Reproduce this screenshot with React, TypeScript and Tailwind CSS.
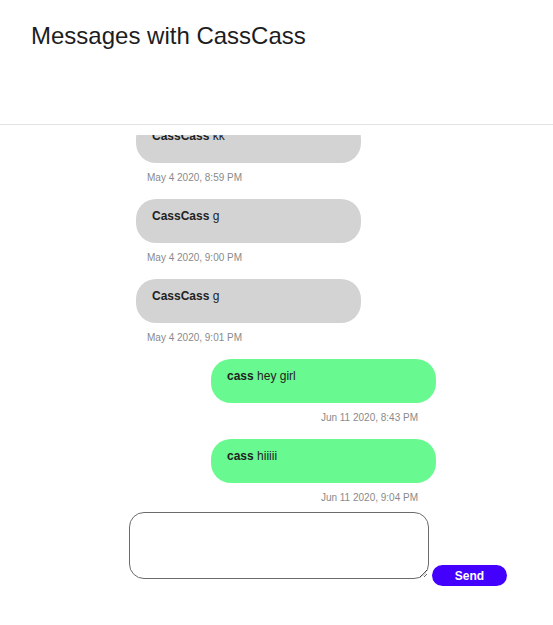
import React from "react";

type Msg = { from: string; text: string; time: string; mine: boolean };

const messages: Msg[] = [
  { from: "CassCass", text: "kk", time: "May 4 2020, 8:59 PM", mine: false },
  { from: "CassCass", text: "g", time: "May 4 2020, 9:00 PM", mine: false },
  { from: "CassCass", text: "g", time: "May 4 2020, 9:01 PM", mine: false },
  { from: "cass", text: "hey girl", time: "Jun 11 2020, 8:43 PM", mine: true },
  { from: "cass", text: "hiiiii", time: "Jun 11 2020, 9:04 PM", mine: true },
];

export default function App() {
  return (
    <div className="h-[625px] w-full bg-white font-['Liberation_Sans',Arial,sans-serif] text-[#222]">
      <header className="h-[125px] border-b border-[#e3e3e3] pl-[31px] pt-[24px]">
        <h1 className="text-[24px] leading-none font-normal text-[#1d1d1f]">Messages with CassCass</h1>
      </header>

      <div className="mt-[10px] flex h-[369px] flex-col justify-end overflow-hidden">
        <div className="ml-[136px] w-[300px]">
          {messages.map((m, i) => (
            <MessageRow key={i} m={m} last={i === messages.length - 1} />
          ))}
        </div>
      </div>

      <div className="ml-[129px] mt-[8px] flex items-start gap-[3px]">
        <textarea className="h-[67px] w-[300px] rounded-[15px] border border-[#6b6b6b] bg-white p-2 text-[12px] outline-none" />
        <button className="mt-[53px] h-[21px] w-[75px] rounded-full bg-[#4400ff] text-[12px] font-bold text-white">
          Send
        </button>
      </div>
    </div>
  );
}

function MessageRow({ m, last }: { m: Msg; last: boolean }) {
  return (
    <div className={`flex flex-col ${m.mine ? "items-end" : "items-start"} ${last ? "" : "mb-[15px]"}`}>
      <div
        className={`h-[44px] w-[225px] rounded-[20px] pl-4 pt-[10px] text-[12px] leading-[15px] ${
          m.mine ? "bg-[#68fa90]" : "bg-[#d3d3d3]"
        }`}
      >
        <span className="font-bold">{m.from}</span> {m.text}
      </div>
      <p
        className={`mt-[9px] text-[10px] leading-[12px] text-[#8a8a8a] ${
          m.mine ? "pr-[18px]" : "pl-[11px]"
        }`}
      >
        {m.time}
      </p>
    </div>
  );
}
